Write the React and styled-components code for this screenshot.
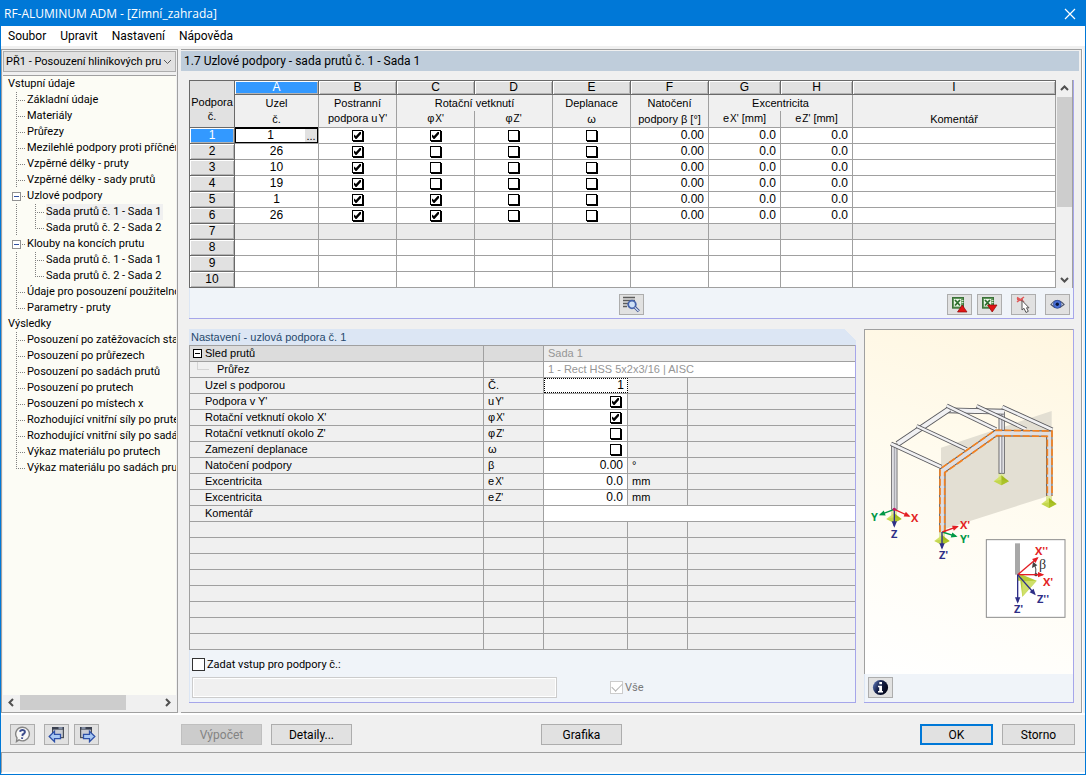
import React from "react";
import styled, { createGlobalStyle, css } from "styled-components";

const uiFont = `Roboto, "Liberation Sans", sans-serif`;
const gridFont = `"Liberation Sans", Arial, sans-serif`;

const c = {
  blue: "#0078d7",
  face: "#f0f0f0",
  line: "#a0a0a0",
  dark: "#696969",
  button: "#e1e1e1",
  buttonLine: "#adadad",
  panel: "#f0f4f9",
  panelLine: "#a6a6ea",
  panelSoft: "#dce6f4",
  select: "#3399ff",
};

const GlobalStyle = createGlobalStyle`
  * { box-sizing: border-box; }
  body { margin: 0; background: ${c.face}; }
  button, input, select { font: inherit; color: inherit; margin: 0; padding: 0; }
`;

/* ---------- window frame ---------- */

const Window = styled.div`
  display: flex;
  flex-direction: column;
  min-height: 100vh;
  border: 1px solid ${c.blue};
  background: ${c.face};
  color: #000;
  font: 11px/16px ${uiFont};
`;

const TitleBar = styled.header`
  display: flex;
  align-items: center;
  justify-content: space-between;
  height: 25px;
  padding: 0 9px 0 3px;
  background: ${c.blue};
  color: #fff;
`;

const WindowTitle = styled.h1`
  margin: 0;
  font: 12px/16px "Open Sans", "Noto Sans", sans-serif;
`;

const CloseButton = styled.button`
  display: flex;
  border: 0;
  background: none;
`;

const MenuBar = styled.nav`
  display: flex;
  gap: 14px;
  height: 20px;
  padding: 2px 7px;
  background: #fff;
`;

const MenuItem = styled.button`
  border: 0;
  background: none;
  font-size: 12px;
  line-height: 16px;
`;

const Workspace = styled.div`
  display: flex;
  flex: 1;
  gap: 3px;
  padding-top: 3px;
  border-bottom: 2px solid #fff;
`;

/* ---------- navigator ---------- */

const Navigator = styled.aside`
  display: flex;
  flex-direction: column;
  flex: none;
  width: 177px;
  padding: 1px 1px 2px;
  border: 1px solid ${c.line};
`;

const CaseSelect = styled.div`
  display: grid;
  align-items: center;
  height: 21px;
  margin-bottom: 3px;
  border: 1px solid ${c.buttonLine};
  background: ${c.button};

  select,
  svg {
    grid-area: 1 / 1;
  }
  select {
    width: 100%;
    padding: 0 14px 0 2px;
    appearance: none;
    border: 0;
    background: none;
    line-height: 18px;
  }
  svg {
    justify-self: end;
    margin-right: 3px;
    pointer-events: none;
  }
`;

const Tree = styled.ul`
  flex: 1;
  margin: 0;
  padding: 0 0 0 5px;
  overflow: hidden;
  border-top: 1px solid ${c.line};
  background: #fcfcf5;
  list-style: none;
`;

const TreeRow = styled.li`
  display: flex;
  height: 16px;
  white-space: nowrap;
`;

const TreeLink = styled.a`
  padding-right: 2px;
  color: #000;
  text-decoration: none;
  background: ${(p) => (p.$active ? c.face : "none")};
`;

const Guide = styled.span`
  display: flex;
  flex: none;
  width: 19px;
  padding-left: 8px;
`;

const Stem = styled.span`
  width: 1px;
  height: ${(p) => (p.$last ? 9 : 16)}px;
  background: repeating-linear-gradient(#808080 0 1px, transparent 1px 2px);
`;

const Arm = styled.span`
  width: 8px;
  height: 1px;
  margin-top: 8px;
  background: repeating-linear-gradient(90deg, transparent 0 1px, #808080 1px 2px);
`;

const ToggleGuide = styled.span`
  display: flex;
  flex: none;
  align-items: center;
  width: 19px;
  padding-left: 4px;
`;

const Toggle = styled.button`
  display: flex;
  align-items: center;
  justify-content: center;
  width: 9px;
  height: 9px;
  border: 1px solid #919191;
  background: #fff;

  &::after {
    content: "";
    width: 5px;
    height: 1px;
    background: #3050a0;
  }
`;

const ToggleArm = styled.span`
  width: 4px;
  height: 1px;
  background: repeating-linear-gradient(90deg, transparent 0 1px, #808080 1px 2px);
`;

/* ---------- scroll bars ---------- */

const ScrollBar = styled.div`
  display: flex;
  flex: none;
  flex-direction: ${(p) => (p.$vertical ? "column" : "row")};
  ${(p) => (p.$vertical ? "width: 15px;" : "height: 15px;")}
  background: ${c.face};
`;

const ScrollArrow = styled.button`
  display: flex;
  flex: 0 0 17px;
  align-items: center;
  justify-content: center;
  border: 0;
  background: none;
`;

const ScrollTrack = styled.div`
  display: flex;
  flex: 1;
  flex-direction: ${(p) => (p.$vertical ? "column" : "row")};
`;

const ScrollThumb = styled.div`
  flex: 0 0 ${(p) => p.$share}%;
  background: #cdcdcd;
`;

/* ---------- main area ---------- */

const Main = styled.main`
  display: flex;
  flex: 1;
  flex-direction: column;
  min-width: 0;
  margin-right: 3px;
  padding: 1px 2px 9px 0;
  border: solid ${c.line};
  border-width: 1px 1px 1px 0;
  box-shadow: 1px 0 #fff;
`;

const PageTitle = styled.h2`
  margin: 0 0 9px;
  padding: 2px 3px;
  background: #bfcddb;
  font: 12px/16px ${uiFont};
`;

const Panels = styled.div`
  display: flex;
  flex: 1;
  flex-direction: column;
  gap: 10px;
  padding: 0 5px 0 8px;
`;

const GridPanel = styled.section`
  border-right: 1px solid ${c.panelLine};
  border-bottom: 1px solid ${c.panelLine};
  background: ${c.panel};
`;

const GridArea = styled.div`
  display: flex;
  border-right: 1px solid ${c.line};
  background: ${c.face};
`;

const GridTools = styled.div`
  display: grid;
  grid-template-columns: 1fr auto 1fr;
  align-items: center;
  height: 30px;
  padding-top: 2px;
  border-left: 1px solid ${c.panelSoft};
`;

const ToolGroup = styled.div`
  display: flex;
  gap: ${(p) => p.$gap || 0}px;
`;

const EndTools = styled(ToolGroup)`
  grid-column: 3;
  justify-self: end;
  margin-right: 3px;
`;

const IconButton = styled.button`
  display: flex;
  flex: none;
  align-items: center;
  justify-content: center;
  width: 25px;
  height: 21px;
  border: 1px solid ${c.buttonLine};
  background: ${c.button};
`;

/* ---------- supports grid ---------- */

const Grid = styled.table`
  flex: 1;
  width: 100%;
  margin-right: 1px;
  table-layout: fixed;
  border-collapse: separate;
  border-spacing: 0;
  border: solid ${c.dark};
  border-width: 1px 0 0 1px;
  font: 11px/14px ${gridFont};
`;

const raised = css`
  border-right: 1px solid ${c.dark};
  border-bottom: 1px solid ${c.dark};
  box-shadow: inset 1px 1px #fff, inset -1px -1px #b4b4b4;
  background: ${c.button};
`;

const selected = css`
  background: ${c.select};
  color: #fff;
`;

const ColLetter = styled.th`
  height: 14px;
  padding: 0;
  font-weight: 400;
  font-size: 12px;
  line-height: 13px;
  ${raised}
  ${(p) => p.$active && selected}
`;

const Corner = styled.th`
  padding: 0 0 4px;
  font-weight: 400;
  vertical-align: bottom;
  border-right: 1px solid ${c.dark};
  border-bottom: 1px solid ${c.dark};
  background: ${c.button};
`;

const HeadTop = styled.th`
  height: 16px;
  padding: 0 0 1px;
  font-weight: 400;
  border-right: 1px solid ${c.line};
  background: ${c.face};
`;

const HeadSub = styled.th`
  height: 17px;
  padding: 0 0 1px;
  font-weight: 400;
  vertical-align: bottom;
  border-right: 1px solid ${c.line};
  border-bottom: 1px solid ${c.line};
  background: ${c.face};
`;

const RowHead = styled.th`
  height: 16px;
  padding: 0 0 1px;
  font-weight: 400;
  font-size: 12px;
  ${raised}
  ${(p) => p.$active && selected}
`;

const Cell = styled.td`
  height: 16px;
  padding: 0 ${(p) => (p.$right ? 4 : 0)}px 0 0;
  border-right: 1px solid ${c.line};
  border-bottom: 1px solid ${c.line};
  background: ${(p) => (p.$shade ? "#ebebeb" : "#fff")};
  font-size: 12px;
  line-height: 15px;
  text-align: ${(p) => (p.$right ? "right" : "center")};
`;

const Editor = styled.div`
  display: flex;
  height: 15px;
  border: 1px solid #000;
  box-shadow: 0 -1px #000;

  input {
    flex: 1;
    min-width: 0;
    border: 0;
    outline: 0;
    background: #fff;
    text-align: center;
  }
  button {
    width: 12px;
    border: 0;
    background: ${c.button};
    font-size: 11px;
    line-height: 10px;
  }
`;

const Check = styled.input.attrs({ type: "checkbox" })`
  display: inline-block;
  width: 11px;
  height: 11px;
  vertical-align: top;
  margin-top: 2px;
  appearance: none;
  border: 1px solid #000;
  background: #fff;
  box-shadow: 1px 1px #000;

  &:checked::before {
    content: "";
    display: block;
    width: 7px;
    height: 7px;
    margin: 1px;
    background: #000;
    clip-path: polygon(0 36%, 28% 58%, 80% 0, 100% 0, 100% 28%, 36% 100%, 22% 100%, 0 72%);
  }
`;

const Sub = styled.span`
  margin-left: 1px;
  font-size: 10px;
`;

/* ---------- details ---------- */

const Lower = styled.div`
  display: flex;
  flex: 1;
  gap: 8px;
`;

const Details = styled.section`
  display: flex;
  flex: 1;
  flex-direction: column;
  min-width: 0;
  border-right: 1px solid ${c.panelLine};
  border-bottom: 1px solid ${c.panelLine};
  background: ${c.panel};
`;

const DetailsTitle = styled.h3`
  margin: 0 -1px 0 0;
  padding: 0 2px;
  background: linear-gradient(225deg, ${c.face} 8px, ${c.panelSoft} 8px);
  color: #27496d;
  font: 11px/16px ${gridFont};
`;

const PropTable = styled.table`
  width: 100%;
  table-layout: fixed;
  border-collapse: separate;
  border-spacing: 0;
  border: solid ${c.line};
  border-width: 1px 0 0 1px;
  background: ${c.face};
  font: 11px/15px ${gridFont};

  th,
  td {
    height: 16px;
    padding: 0 4px;
    font-weight: 400;
    text-align: left;
    white-space: nowrap;
    border-right: 1px solid ${c.line};
    border-bottom: 1px solid ${c.line};
  }
  td:last-child {
    border-right: 0;
  }
`;

const PropRow = styled.tr`
  background: ${(p) => (p.$group ? "#dcdcdc" : "none")};
`;

const PropName = styled.th`
  && {
    padding-left: ${(p) => (p.$tight ? 3 : 15)}px;
  }
`;

const PropLabel = styled.span`
  display: flex;
  align-items: center;
  height: 15px;
`;

const Expander = styled(Toggle)`
  margin-right: 3px;
  border-color: #000;

  &::after {
    background: #000;
  }
`;

const Branch = styled.span`
  width: 12px;
  height: 8px;
  margin: 0 8px 7px 4px;
  border: solid #d4d4d4;
  border-width: 0 0 1px 1px;
`;

const WideValue = styled.td`
  background: ${(p) => (p.$shade ? "#ebebeb" : "#fff")};
  color: #969696;
`;

const PropValue = styled.td`
  background: #fff;
  font-size: 12px;

  && {
    text-align: right;
  }
  ${Check} {
    margin: 2px 2px 0 0;
  }
`;

const FocusValue = styled.input`
  display: block;
  width: 84px;
  height: 15px;
  margin: 0 -4px;
  padding-right: 3px;
  border: 1px dotted #000;
  outline: 0;
  text-align: right;
`;

const Assign = styled.div`
  display: flex;
  flex: 1;
  flex-direction: column;
  align-items: flex-start;
  padding: 8px 2px 3px;
  border-left: 1px solid ${c.panelSoft};
`;

const CheckLabel = styled.label`
  display: flex;
  align-items: center;
  gap: 2px;
  height: 13px;
  color: ${(p) => (p.$off ? "#787878" : "#000")};
`;

const FlatCheck = styled.input.attrs({ type: "checkbox" })`
  display: flex;
  align-items: center;
  justify-content: center;
  width: 13px;
  height: 13px;
  appearance: none;
  border: 1px solid #333;
  background: #fff;

  &:disabled {
    border-color: #ccc;
  }
  &:checked::before {
    content: "";
    width: 9px;
    height: 5px;
    margin-top: -3px;
    border: solid #b4b4b4;
    border-width: 0 0 1px 1px;
    transform: rotate(-45deg);
  }
`;

const AssignRow = styled.div`
  display: flex;
  align-items: center;
  align-self: stretch;
  gap: 53px;
  margin-top: 6px;
`;

const NumberList = styled.input`
  flex: 0 1 365px;
  min-width: 0;
  height: 21px;
  border: 1px solid #ccc;
  box-shadow: inset 0 0 0 1px #fff;
  background: ${c.face};
`;

/* ---------- picture ---------- */

const Picture = styled.section`
  display: flex;
  flex: none;
  flex-direction: column;
  width: 210px;
  border-right: 1px solid ${c.panelLine};
  border-bottom: 1px solid ${c.panelLine};
  background: ${c.panel};
`;

const Canvas = styled.div`
  flex: 1;
  border: solid ${c.line};
  border-width: 1px 0 0 1px;
  background: linear-gradient(197deg, #fff6e0 0%, #fffbee 40%, #fff 100%);

  svg {
    display: block;
    width: 100%;
  }
`;

const PictureTools = styled.div`
  padding: 3px 3px 4px;
  border-left: 1px solid ${c.panelSoft};
`;

/* ---------- footer ---------- */

const Footer = styled.footer`
  display: flex;
  align-items: center;
  height: 37px;
  padding: 2px 10px 0 9px;
`;

const HelpTools = styled(ToolGroup)`
  margin-right: 82px;
  gap: 5px;

  ${IconButton}:first-child {
    margin-right: 4px;
  }
`;

const CommandButton = styled.button`
  width: ${(p) => p.$width || 81}px;
  height: 21px;
  border: 1px solid ${c.buttonLine};
  background: ${c.button};
  font-size: 12px;
  line-height: 16px;

  &:disabled {
    border-color: #bfbfbf;
    background: #ccc;
    color: #838383;
  }
`;

const DefaultButton = styled(CommandButton)`
  border: 2px solid ${c.blue};
`;

const Spring = styled.span`
  flex: ${(p) => p.$grow};
`;

const StatusBar = styled.div`
  height: 22px;
  border-top: 1px solid ${c.line};
  border-left: 1px solid ${c.line};
  border-bottom: 2px solid #fff;
`;

/* ---------- drawings ---------- */

const Chevron = ({ dir, thin }) => {
  const d = {
    up: "M1 6 L4.500 2.500 L8 6",
    down: "M1 3 L4.500 6.500 L8 3",
    left: "M6 1 L2.500 4.500 L6 8",
    right: "M3 1 L6.500 4.500 L3 8",
  }[dir];
  return (
    <svg width="9" height="9" viewBox="0 0 9 9" fill="none" stroke={thin ? "#555" : "#505050"} strokeWidth={thin ? 1 : 2} aria-hidden="true">
      <path d={d} />
    </svg>
  );
};

const FindIcon = () => (
  <svg width="19" height="17" viewBox="0 0 19 17" aria-hidden="true">
    <path d="M1 1.500H13M1 4.500H13M1 7.500H6M1 10.500H5" stroke="#5c5c5c" strokeWidth="1.400" />
    <circle cx="10" cy="8.500" r="3.800" fill="#cfe0f6" stroke="#4664ac" strokeWidth="1.800" />
    <path d="M12.800 11.300L16.800 15.300" stroke="#3c5090" strokeWidth="3" />
    <path d="M12.800 11.300L16.500 15" stroke="#dce8f8" strokeWidth="1.200" />
  </svg>
);

const ExcelIcon = ({ down }) => (
  <svg width="19" height="17" viewBox="0 0 19 17" aria-hidden="true">
    <rect x="2" y="1" width="12" height="11.500" fill="#6da367" />
    <rect x="2.600" y="1.600" width="10.800" height="10.300" fill="none" stroke="#3a7038" strokeWidth="1.200" />
    <rect x="4" y="3" width="7" height="7.500" fill="#eef7ea" />
    <path d="M5 4L10 9.500M10 4L5 9.500" stroke="#2d6e2d" strokeWidth="1.800" />
    <path d="M11.500 4.500h2M11.500 6.500h2" stroke="#d4ead0" />
    <path d={down ? "M7.500 9H17L12.200 16Z" : "M7.500 16H17L12.200 9Z"} fill="#e31414" stroke="#8c0a0a" strokeWidth="0.700" />
  </svg>
);

const PickIcon = () => (
  <svg width="19" height="17" viewBox="0 0 19 17" aria-hidden="true">
    <path d="M3 1.500L10 6M10 1L3 6M3 3.500H9" stroke="#e05858" strokeWidth="1.500" />
    <path d="M8 4.500V14L10 12.300L12 16.500L14.300 15.300L12.500 11.800H15Z" fill="#fff" stroke="#555" strokeWidth="1" />
  </svg>
);

const EyeIcon = () => (
  <svg width="19" height="17" viewBox="0 0 19 17" aria-hidden="true">
    <path d="M3 8.500Q9 0.500 16 8.500Q9 15 3 8.500Z" fill="#f4f6fc" stroke="#50586e" strokeWidth="1.200" />
    <circle cx="9.300" cy="8.300" r="4" fill="#4a70d6" stroke="#24408c" strokeWidth="0.600" />
    <circle cx="9.300" cy="8.300" r="1.700" fill="#0a1840" />
  </svg>
);

const HelpIcon = () => (
  <svg width="17" height="17" viewBox="0 0 17 17" aria-hidden="true">
    <path d="M8.500 1.200A6.800 6.800 0 1 1 5 13.800L2.500 15.500L3 12A6.800 6.800 0 0 1 8.500 1.200Z" fill="#f8f8f8" stroke="#858585" strokeWidth="1.400" />
    <path d="M6 5.800Q6.400 3.800 8.700 3.900Q11.200 4.200 10.800 6.400Q10.300 7.800 8.700 8.500L8.400 10M8.200 11.400L8 12.800" fill="none" stroke="#3c4c8c" strokeWidth="2" />
  </svg>
);

const PageIcon = ({ forward }) => (
  <svg width="18" height="17" viewBox="0 0 18 17" aria-hidden="true">
    <g transform={forward ? "translate(18 0) scale(-1 1)" : undefined}>
      <rect x="4.600" y="1.600" width="10.800" height="10" fill="#c9ccd4" stroke="#4c5058" strokeWidth="1.200" />
      <path d="M4 2.300H16" stroke="#3a4050" strokeWidth="2.600" />
      <path d="M10.500 2H14.500" stroke="#c8d8f4" />
      <path d="M1.200 10.500L6.500 5.300V8.300H12.500V12.700H6.500V15.700Z" fill="#a9c9f4" stroke="#2d50a8" strokeWidth="1.300" />
    </g>
  </svg>
);

const InfoIcon = () => (
  <svg width="17" height="17" viewBox="0 0 17 17" aria-hidden="true">
    <defs>
      <linearGradient id="ball" x1="0" y1="0" x2="1" y2="0.500">
        <stop offset="0" stopColor="#6a86cc" />
        <stop offset="0.500" stopColor="#16224c" />
        <stop offset="1" stopColor="#05081c" />
      </linearGradient>
    </defs>
    <circle cx="8.500" cy="8.500" r="7.600" fill="url(#ball)" />
    <path d="M7.300 3H10V5.200H7.300ZM6 6.800H10V12H11V13.500H6V12H7.200V8.200H6Z" fill="#fff" />
  </svg>
);

const Axis = ({ x, y, color, children }) => (
  <text x={x} y={y} fill={color} fontSize="11" fontWeight="700" fontFamily={`"Open Sans", sans-serif`}>
    {children}
  </text>
);

const Foot = ({ x, y }) => (
  <g transform={`translate(${x} ${y})`}>
    <path d="M-9 0H9V14H-9Z" fill="#dfe9a0" />
    <path d="M0 7L-23 25L0 37Z" fill="#d3e268" />
    <path d="M0 7L23 25L0 37Z" fill="#a3bb1c" />
    <path d="M-23 25L0 20L23 25L0 37Z" fill="#b4cb34" opacity="0.500" />
  </g>
);

const Beam = ({ d, w = 11, fill = "#f1f1f3" }) => (
  <>
    <path d={d} fill="none" stroke="#58585c" strokeWidth={w} />
    <path d={d} fill="none" stroke={fill} strokeWidth={w - 5} />
  </>
);

const Post = ({ x, top, bottom }) => (
  <>
    <rect x={x - 8} y={top} width="16" height={bottom - top} fill="#ececef" stroke="#55555a" strokeWidth="2.500" />
    <rect x={x - 2} y={top} width="5" height={bottom - top} fill="#a9a9b0" />
  </>
);

const Arrow = ({ x1, y1, x2, y2, color }) => {
  const a = (Math.atan2(y2 - y1, x2 - x1) * 180) / Math.PI;
  return (
    <>
      <line x1={x1} y1={y1} x2={x2} y2={y2} stroke={color} strokeWidth="4" />
      <path d="M5 0L-14 -8V8Z" fill={color} transform={`translate(${x2} ${y2}) rotate(${a})`} />
    </>
  );
};

const red = "#e31e24";
const green = "#009846";
const navy = "#2e2f87";

const FrameDrawing = () => (
  <svg viewBox="0 0 208 344" role="img" aria-label="Hala s uzlovými podporami">
    <g transform="translate(-5 50) scale(0.33333)">
      <path d="M243 203L575 93V345L255 447H243Z" fill="#e3dfd3" />
      <Foot x={102} y={392} />
      <Foot x={246} y={458} />
      <Foot x={424} y={279} />
      <Foot x={567} y={347} />
      <Post x={425} top={96} bottom={280} />
      <Beam d="M262 91L432 95" w={17} />
      <Beam d="M112 192L268 87" w={18} />
      <Post x={103} top={192} bottom={388} />
      <Beam d="M260 77L408 148" w={13} />
      <Beam d="M350 78L498 148" w={12} />
      <Beam d="M427 81L577 149" w={13} />
      <Beam d="M170 138L320 208" w={12} />
      <Beam d="M93 191L244 261" w={13} />
      <path d="M247 457V272L408 159L568 161V348" fill="none" stroke="#55555a" strokeWidth="19" />
      <path d="M247 457V272L408 159L568 161V348" fill="none" stroke="#dedee2" strokeWidth="13" />
      <path d="M240 457V267L405 151L576 153V348M254 457V278L411 167L562 169V348" fill="none" stroke="#f5821f" strokeWidth="5" strokeDasharray="21 7" />
      <Arrow x1={103} y1={388} x2={61} y2={404} color={green} />
      <Arrow x1={103} y1={388} x2={147} y2={408} color={red} />
      <Arrow x1={103} y1={388} x2={103} y2={438} color={navy} />
      <Arrow x1={247} y1={456} x2={288} y2={469} color={green} />
      <Arrow x1={247} y1={456} x2={292} y2={440} color={red} />
      <Arrow x1={246} y1={456} x2={246} y2={504} color={navy} />
      <circle cx="103" cy="388" r="5" fill="#c01860" />
      <rect x="379" y="479" width="236" height="233" fill="#fff" stroke="#8c8c8c" strokeWidth="3" />
      <rect x="465" y="490" width="15" height="94" fill="#a8a8a8" />
      <path d="M473 584H487L530 602L487 650L481 602H473Z" fill="#b5cb38" />
      <path d="M487 604L530 602L487 650Z" fill="#cfe06a" />
      <path d="M527 584Q530 566 523 552" fill="none" stroke="#444" strokeWidth="3" />
      <path d="M516 564L519 545L532 556Z" fill="#444" />
      <circle cx="528" cy="584" r="5" fill="#444" />
      <Arrow x1={473} y1={584} x2={548} y2={584} color={red} />
      <Arrow x1={473} y1={584} x2={532} y2={534} color={red} />
      <Arrow x1={473} y1={584} x2={473} y2={666} color={navy} />
      <Arrow x1={473} y1={584} x2={524} y2={642} color={navy} />
    </g>
    <Axis x={6} y={191} color={green}>Y</Axis>
    <Axis x={46} y={192} color={red}>X</Axis>
    <Axis x={26} y={208} color={navy}>Z</Axis>
    <Axis x={95} y={199} color={red}>X'</Axis>
    <Axis x={95} y={213} color={green}>Y'</Axis>
    <Axis x={74} y={229} color={navy}>Z'</Axis>
    <Axis x={170} y={225} color={red}>X''</Axis>
    <Axis x={178} y={256} color={red}>X'</Axis>
    <Axis x={172} y={273} color={navy}>Z''</Axis>
    <Axis x={149} y={283} color={navy}>Z'</Axis>
    <text x="174" y="239" fill="#333" fontSize="14" fontFamily={`"Liberation Serif", serif`}>β</text>
  </svg>
);

/* ---------- data ---------- */

const tree = [
  [0, "Vstupní údaje"],
  [1, "Základní údaje"],
  [1, "Materiály"],
  [1, "Průřezy"],
  [1, "Mezilehlé podpory proti příčném"],
  [1, "Vzpěrné délky - pruty"],
  [1, "Vzpěrné délky - sady prutů"],
  [1, "Uzlové podpory", "open"],
  [2, "Sada prutů č. 1 - Sada 1", "active"],
  [2, "Sada prutů č. 2 - Sada 2", "last"],
  [1, "Klouby na koncích prutu", "open"],
  [2, "Sada prutů č. 1 - Sada 1"],
  [2, "Sada prutů č. 2 - Sada 2", "last"],
  [1, "Údaje pro posouzení použitelno"],
  [1, "Parametry - pruty", "last"],
  [0, "Výsledky"],
  [1, "Posouzení po zatěžovacích stav"],
  [1, "Posouzení po průřezech"],
  [1, "Posouzení po sadách prutů"],
  [1, "Posouzení po prutech"],
  [1, "Posouzení po místech x"],
  [1, "Rozhodující vnitřní síly po prute"],
  [1, "Rozhodující vnitřní síly po sadác"],
  [1, "Výkaz materiálu po prutech"],
  [1, "Výkaz materiálu po sadách prut", "last"],
];

const supports = [
  { node: 1, y: true, x: true },
  { node: 26, y: true, x: false },
  { node: 10, y: true, x: false },
  { node: 19, y: true, x: false },
  { node: 1, y: true, x: true },
  { node: 26, y: true, x: true },
];

const props = [
  { name: "Podpora v Y'", sym: ["u", "Y'"], check: true },
  { name: "Rotační vetknutí okolo X'", sym: ["φ", "X'"], check: true },
  { name: "Rotační vetknutí okolo Z'", sym: ["φ", "Z'"], check: false },
  { name: "Zamezení deplanace", sym: ["ω"], check: false },
  { name: "Natočení podpory", sym: ["β"], value: "0.00", unit: "°" },
  { name: "Excentricita", sym: ["e", "X'"], value: "0.0", unit: "mm" },
  { name: "Excentricita", sym: ["e", "Z'"], value: "0.0", unit: "mm" },
];

const colWidths = [45, 84, 78, 78, 78, 78, 78, 72, 72];

const Symbol = ({ parts }) => (
  <>
    {parts[0]}
    {parts[1] && <Sub>{parts[1]}</Sub>}
  </>
);

const TreeItem = ({ level, label, state }) => (
  <TreeRow>
    {level > 0 && state === "open" && (
      <ToggleGuide>
        <Toggle type="button" aria-label={`Sbalit ${label}`} />
        <ToggleArm />
      </ToggleGuide>
    )}
    {level === 1 && state !== "open" && (
      <Guide>
        <Stem $last={state === "last"} />
        <Arm />
      </Guide>
    )}
    {level === 2 && (
      <>
        <Guide>
          <Stem />
        </Guide>
        <Guide>
          <Stem $last={state === "last"} />
          <Arm />
        </Guide>
      </>
    )}
    <TreeLink href="#" $active={state === "active"}>
      {label}
    </TreeLink>
  </TreeRow>
);

const SupportsGrid = () => (
  <Grid>
    <colgroup>
      {colWidths.map((w, i) => (
        <col key={i} style={{ width: w }} />
      ))}
      <col />
    </colgroup>
    <thead>
      <tr>
        <Corner rowSpan={3}>
          Podpora
          <br />
          č.
        </Corner>
        {"ABCDEFGHI".split("").map((l) => (
          <ColLetter key={l} $active={l === "A"}>
            {l}
          </ColLetter>
        ))}
      </tr>
      <tr>
        <HeadTop>Uzel</HeadTop>
        <HeadTop>Postranní</HeadTop>
        <HeadTop colSpan={2}>Rotační vetknutí</HeadTop>
        <HeadTop>Deplanace</HeadTop>
        <HeadTop>Natočení</HeadTop>
        <HeadTop colSpan={2}>Excentricita</HeadTop>
        <HeadSub rowSpan={2}>Komentář</HeadSub>
      </tr>
      <tr>
        <HeadSub>č.</HeadSub>
        <HeadSub>podpora <Symbol parts={["u", "Y'"]} /></HeadSub>
        <HeadSub><Symbol parts={["φ", "X'"]} /></HeadSub>
        <HeadSub><Symbol parts={["φ", "Z'"]} /></HeadSub>
        <HeadSub>ω</HeadSub>
        <HeadSub>podpory β [°]</HeadSub>
        <HeadSub><Symbol parts={["e", "X'"]} /> [mm]</HeadSub>
        <HeadSub><Symbol parts={["e", "Z'"]} /> [mm]</HeadSub>
      </tr>
    </thead>
    <tbody>
      {supports.map((s, i) => (
        <tr key={i}>
          <RowHead $active={i === 0}>{i + 1}</RowHead>
          <Cell>
            {i === 0 ? (
              <Editor>
                <input defaultValue={s.node} aria-label="Uzel č." />
                <button type="button" aria-label="Vybrat uzel">...</button>
              </Editor>
            ) : (
              s.node
            )}
          </Cell>
          <Cell><Check defaultChecked={s.y} aria-label="Postranní podpora" /></Cell>
          <Cell><Check defaultChecked={s.x} aria-label="Vetknutí okolo X'" /></Cell>
          <Cell><Check aria-label="Vetknutí okolo Z'" /></Cell>
          <Cell><Check aria-label="Deplanace" /></Cell>
          <Cell $right>0.00</Cell>
          <Cell $right>0.0</Cell>
          <Cell $right>0.0</Cell>
          <Cell />
        </tr>
      ))}
      {[7, 8, 9, 10].map((n) => (
        <tr key={n}>
          <RowHead>{n}</RowHead>
          {colWidths.map((_, k) => (
            <Cell key={k} $shade={n === 7} />
          ))}
        </tr>
      ))}
    </tbody>
  </Grid>
);

const PropertyTable = () => (
  <PropTable>
    <colgroup>
      <col style={{ width: 294 }} />
      <col style={{ width: 60 }} />
      <col style={{ width: 84 }} />
      <col style={{ width: 60 }} />
      <col />
    </colgroup>
    <tbody>
      <PropRow $group>
        <PropName $tight>
          <PropLabel>
            <Expander type="button" aria-label="Sbalit" />
            Sled prutů
          </PropLabel>
        </PropName>
        <td />
        <WideValue $shade colSpan={3}>Sada 1</WideValue>
      </PropRow>
      <PropRow>
        <PropName $tight>
          <PropLabel>
            <Branch />
            Průřez
          </PropLabel>
        </PropName>
        <td />
        <WideValue colSpan={3}>1 - Rect HSS 5x2x3/16 | AISC</WideValue>
      </PropRow>
      <PropRow>
        <PropName>Uzel s podporou</PropName>
        <td>Č.</td>
        <PropValue>
          <FocusValue defaultValue="1" aria-label="Uzel s podporou" />
        </PropValue>
        <td />
        <td />
      </PropRow>
      {props.map((p, i) => (
        <PropRow key={i}>
          <PropName>{p.name}</PropName>
          <td><Symbol parts={p.sym} /></td>
          <PropValue>
            {p.value || <Check defaultChecked={p.check} aria-label={p.name} />}
          </PropValue>
          <td>{p.unit}</td>
          <td />
        </PropRow>
      ))}
      <PropRow>
        <PropName>Komentář</PropName>
        <td />
        <WideValue colSpan={3} />
      </PropRow>
      {Array.from({ length: 8 }, (_, i) => (
        <PropRow key={i}>
          <PropName />
          <td />
          <td />
          <td />
          <td />
        </PropRow>
      ))}
    </tbody>
  </PropTable>
);

export default function App() {
  return (
    <Window>
      <GlobalStyle />
      <TitleBar>
        <WindowTitle>RF-ALUMINUM ADM - [Zimní_zahrada]</WindowTitle>
        <CloseButton type="button" aria-label="Zavřít">
          <svg width="12" height="12" viewBox="0 0 12 12" stroke="#fff" strokeWidth="1.200" aria-hidden="true">
            <path d="M1 1L11 11M11 1L1 11" />
          </svg>
        </CloseButton>
      </TitleBar>
      <MenuBar>
        {["Soubor", "Upravit", "Nastavení", "Nápověda"].map((m) => (
          <MenuItem key={m} type="button">{m}</MenuItem>
        ))}
      </MenuBar>

      <Workspace>
        <Navigator>
          <CaseSelect>
            <select aria-label="Případ" defaultValue="1">
              <option value="1">PŘ1 - Posouzení hliníkových pru</option>
            </select>
            <Chevron dir="down" thin />
          </CaseSelect>
          <Tree>
            {tree.map(([level, label, state], i) => (
              <TreeItem key={i} level={level} label={label} state={state} />
            ))}
          </Tree>
          <ScrollBar>
            <ScrollArrow type="button" aria-label="Vlevo"><Chevron dir="left" /></ScrollArrow>
            <ScrollTrack><ScrollThumb $share={76} /></ScrollTrack>
            <ScrollArrow type="button" aria-label="Vpravo"><Chevron dir="right" /></ScrollArrow>
          </ScrollBar>
        </Navigator>

        <Main>
          <PageTitle>1.7 Uzlové podpory - sada prutů č. 1 - Sada 1</PageTitle>
          <Panels>
            <GridPanel>
              <GridArea>
                <SupportsGrid />
                <ScrollBar $vertical>
                  <ScrollArrow type="button" aria-label="Nahoru"><Chevron dir="up" /></ScrollArrow>
                  <ScrollTrack $vertical><ScrollThumb $share={63} /></ScrollTrack>
                  <ScrollArrow type="button" aria-label="Dolů"><Chevron dir="down" /></ScrollArrow>
                </ScrollBar>
              </GridArea>
              <GridTools>
                <span />
                <IconButton type="button" aria-label="Najít"><FindIcon /></IconButton>
                <EndTools $gap={9}>
                  <ToolGroup $gap={5}>
                    <IconButton type="button" aria-label="Export do Excelu"><ExcelIcon /></IconButton>
                    <IconButton type="button" aria-label="Import z Excelu"><ExcelIcon down /></IconButton>
                  </ToolGroup>
                  <IconButton type="button" aria-label="Vybrat"><PickIcon /></IconButton>
                  <IconButton type="button" aria-label="Zobrazit"><EyeIcon /></IconButton>
                </EndTools>
              </GridTools>
            </GridPanel>

            <Lower>
              <Details>
                <DetailsTitle>Nastavení - uzlová podpora č. 1</DetailsTitle>
                <PropertyTable />
                <Assign>
                  <CheckLabel>
                    <FlatCheck />
                    Zadat vstup pro podpory č.:
                  </CheckLabel>
                  <AssignRow>
                    <NumberList disabled aria-label="Čísla podpor" />
                    <CheckLabel $off>
                      <FlatCheck disabled defaultChecked />
                      Vše
                    </CheckLabel>
                  </AssignRow>
                </Assign>
              </Details>

              <Picture>
                <Canvas><FrameDrawing /></Canvas>
                <PictureTools>
                  <IconButton type="button" aria-label="Informace"><InfoIcon /></IconButton>
                </PictureTools>
              </Picture>
            </Lower>
          </Panels>
        </Main>
      </Workspace>

      <Footer>
        <HelpTools>
          <IconButton type="button" aria-label="Nápověda"><HelpIcon /></IconButton>
          <IconButton type="button" aria-label="Předchozí"><PageIcon /></IconButton>
          <IconButton type="button" aria-label="Další"><PageIcon forward /></IconButton>
        </HelpTools>
        <ToolGroup $gap={9}>
          <CommandButton type="button" disabled>Výpočet</CommandButton>
          <CommandButton type="button">Detaily...</CommandButton>
        </ToolGroup>
        <Spring $grow={189} />
        <CommandButton type="button">Grafika</CommandButton>
        <Spring $grow={298} />
        <ToolGroup $gap={9}>
          <DefaultButton type="button" $width={73}>OK</DefaultButton>
          <CommandButton type="button" $width={73}>Storno</CommandButton>
        </ToolGroup>
      </Footer>
      <StatusBar />
    </Window>
  );
}
